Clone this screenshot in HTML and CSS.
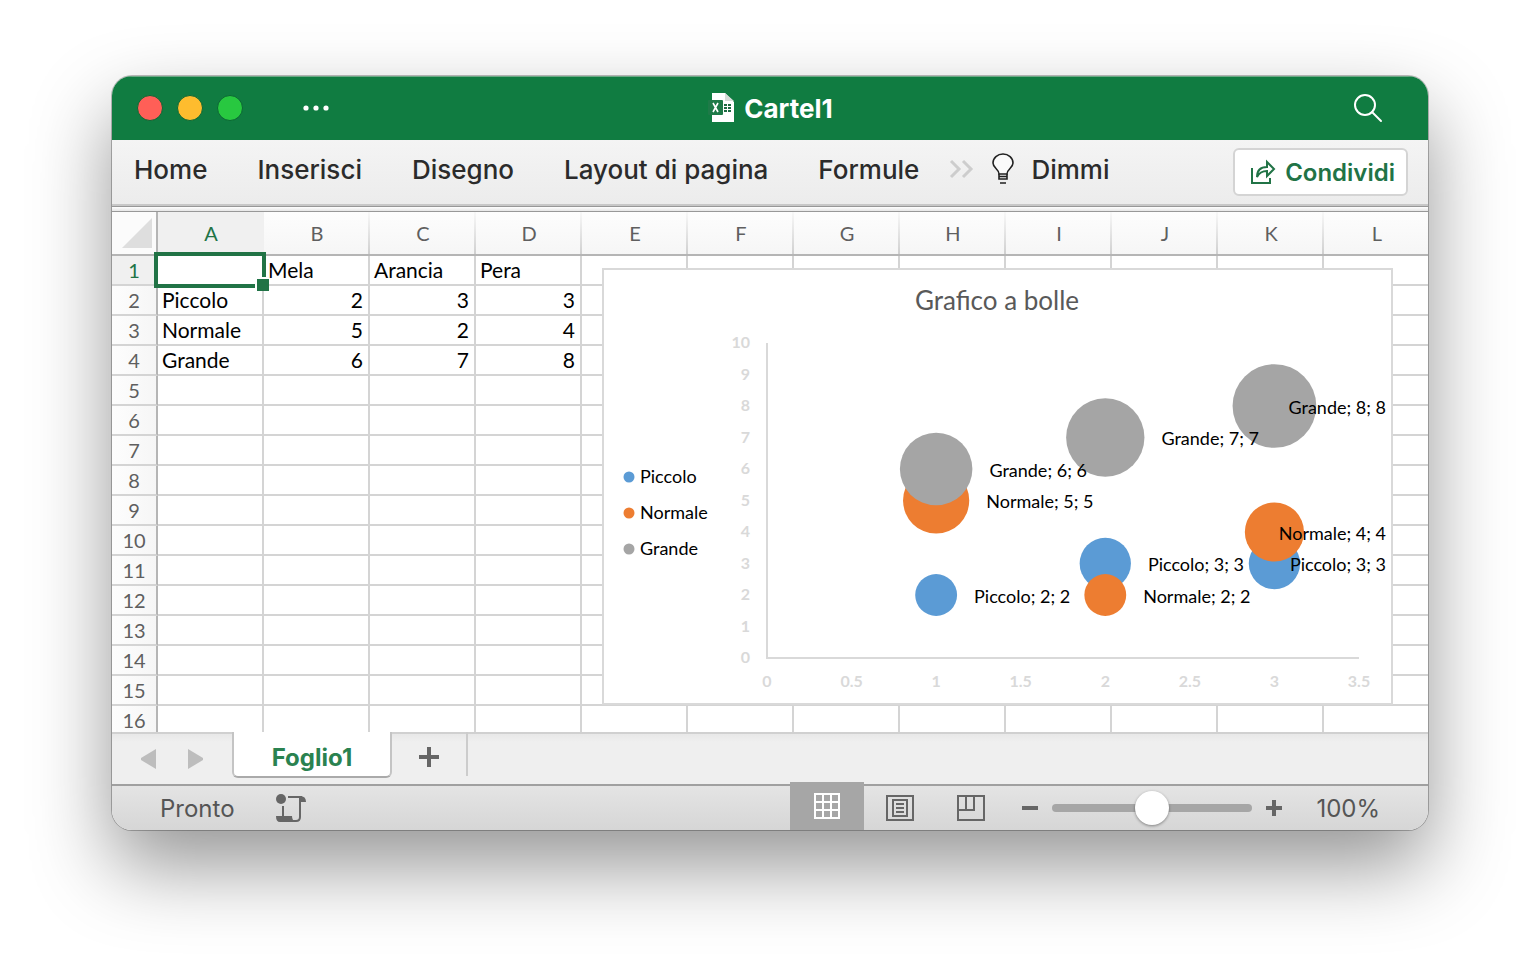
FILE: index.html
```html
<!DOCTYPE html>
<html lang="it">
<head>
    <meta charset="UTF-8">
    <meta name="viewport" content="width=device-width, initial-scale=1.0">
    <title>Cartel1</title>
    <link rel="stylesheet" href="styles.css">
</head>
<body>
    <main class="window">
        <header class="titlebar">
            <div class="titlebar-left">
                <button class="light close" aria-label="Chiudi"></button>
                <button class="light minimize" aria-label="Riduci a icona"></button>
                <button class="light maximize" aria-label="Ingrandisci"></button>
                <button class="icon-button more" aria-label="Altro">
                    <svg width="28" height="8" viewBox="0 0 28 8" fill="#fff">
                        <circle cx="4" cy="4" r="2.6"/><circle cx="14" cy="4" r="2.6"/><circle cx="24" cy="4" r="2.6"/>
                    </svg>
                </button>
            </div>
            <h1>
                <svg width="28" height="32" viewBox="0 0 28 32">
                    <path d="M5 1h13l9 9v20H5z" fill="#fff"/>
                    <path d="M18 1v8h9z" fill="#d5ddd8"/>
                    <g fill="#1d6b42">
                        <path d="M17 12h3v2h-3zM21 12h3v2h-3zM17 15h3v2h-3zM21 15h3v2h-3zM17 18h3v2h-3zM21 18h3v2h-3z"/>
                    </g>
                    <rect x="1" y="8" width="15" height="15" rx="1" fill="#1e7a48"/>
                    <path d="M6 11l5 9M11 11l-5 9" stroke="#fff" stroke-width="1.6"/>
                </svg>
                Cartel1
            </h1>
            <button class="icon-button search" aria-label="Cerca">
                <svg width="30" height="30" viewBox="0 0 30 30" fill="none" stroke="#fff" stroke-width="2">
                    <circle cx="12" cy="12" r="10"/><path d="M19 19l9 9" stroke-linecap="round"/>
                </svg>
            </button>
        </header>

        <nav class="ribbon">
            <button class="tab">Home</button>
            <button class="tab">Inserisci</button>
            <button class="tab">Disegno</button>
            <button class="tab">Layout di pagina</button>
            <button class="tab">Formule</button>
            <div class="ribbon-more">
                <button class="icon-button" aria-label="Altre schede">
                    <svg width="26" height="20" viewBox="0 0 26 20" fill="none" stroke="#cdcdcd" stroke-width="3">
                        <path d="M2 2l8 8-8 8M14 2l8 8-8 8"/>
                    </svg>
                </button>
                <button class="tab tell-me">
                    <svg width="24" height="32" viewBox="0 0 24 32" fill="none" stroke="#222" stroke-width="1.6">
                        <path d="M8 21c0-5-6-6-6-11a10 9 0 0 1 20 0c0 5-6 6-6 11z" fill="#fafafa"/>
                        <path d="M8 21v5h8v-5M8 23.500h8M9 30h6"/>
                    </svg>
                    Dimmi
                </button>
            </div>
            <button class="share">
                <svg width="26" height="26" viewBox="0 0 26 26" fill="none" stroke="#217346" stroke-width="2">
                    <path d="M2 9v15h18v-5"/>
                    <path d="M7 18c0-7 4-10 10-10V3l7 7-7 7v-5c-5 0-8 2-10 6z"/>
                </svg>
                Condividi
            </button>
        </nav>

        <section class="sheet">
            <table>
                <thead><tr id="columns"></tr></thead>
                <tbody id="rows"></tbody>
            </table>
            <figure class="chart">
                <svg id="chart" viewBox="0 0 787 433" role="img" aria-label="Grafico a bolle"></svg>
            </figure>
        </section>

        <div class="sheet-tabs">
            <button class="icon-button arrow" aria-label="Foglio precedente">
                <svg width="16" height="20" viewBox="0 0 16 20" fill="#bdbdbd"><path d="M15 0v20L0 11V9z"/></svg>
            </button>
            <button class="icon-button arrow" aria-label="Foglio successivo">
                <svg width="16" height="20" viewBox="0 0 16 20" fill="#bdbdbd"><path d="M1 0v20l15-9V9z"/></svg>
            </button>
            <button class="sheet-tab">Foglio1</button>
            <button class="icon-button add-sheet" aria-label="Nuovo foglio">
                <svg width="20" height="20" viewBox="0 0 20 20" stroke="#666" stroke-width="4"><path d="M0 10h20M10 0v20"/></svg>
            </button>
        </div>

        <footer class="status">
            <span>Pronto</span>
            <button class="icon-button macro" aria-label="Registra macro">
                <svg width="32" height="30" viewBox="0 0 32 30" fill="none" stroke="#666" stroke-width="2">
                    <circle cx="6" cy="6" r="5" fill="#666" stroke="none"/>
                    <path d="M8 13v11M13 4h14M25 5v19q0 4-4 4h-3"/>
                    <path d="M1 23h16q0 5 4 6H5q-4 0-4-6z" fill="#666" stroke="none"/>
                    <path d="M25 3q6 0 6 6h-6z" fill="#666" stroke="none"/>
                </svg>
            </button>
            <button class="view active" aria-label="Vista normale">
                <svg width="28" height="28" viewBox="0 0 28 28" fill="none" stroke="#fff" stroke-width="2">
                    <path d="M2 2h24v24H2zM10 2v24M18 2v24M2 10h24M2 18h24"/>
                </svg>
            </button>
            <button class="view" aria-label="Layout di pagina">
                <svg width="28" height="26" viewBox="0 0 28 26" fill="none" stroke="#666" stroke-width="2">
                    <path d="M1 1h26v24H1zM7 5h14v16H7zM10 9h8M10 13h8M10 17h8"/>
                </svg>
            </button>
            <button class="view" aria-label="Anteprima interruzioni di pagina">
                <svg width="28" height="26" viewBox="0 0 28 26" fill="none" stroke="#666" stroke-width="2">
                    <path d="M1 1h26v24H1zM1 15h16V1M9 1v14"/>
                </svg>
            </button>
            <div class="zoom">
                <button class="icon-button" aria-label="Riduci">
                    <svg width="16" height="16" viewBox="0 0 16 16" stroke="#666" stroke-width="4"><path d="M0 8h16"/></svg>
                </button>
                <input type="range" min="0" max="200" value="100" aria-label="Zoom">
                <button class="icon-button" aria-label="Aumenta">
                    <svg width="16" height="16" viewBox="0 0 16 16" stroke="#666" stroke-width="4"><path d="M0 8h16M8 0v16"/></svg>
                </button>
            </div>
            <span>100%</span>
        </footer>
    </main>
    <script src="script.js"></script>
</body>
</html>
```
FILE: styles.css
```css
* {
    box-sizing: border-box;
}
body {
    margin: 0;
    padding: 76px 112px 148px;
    height: 100vh;
    display: flex;
    background-color: #fff;
    font-family: Inter, "Liberation Sans", sans-serif;
}
button {
    border: none;
    background: none;
    padding: 0;
    font-family: inherit;
    cursor: pointer;
}
svg {
    display: block;
    flex: none;
}
.window {
    flex: 1;
    min-width: 0;
    display: flex;
    flex-direction: column;
    border-radius: 20px;
    overflow: hidden;
    background-color: #fff;
    box-shadow: 0 0 0 1px rgba(0, 0, 0, 0.25), 0 36px 80px rgba(0, 0, 0, 0.42);
}
.icon-button {
    display: flex;
    align-items: center;
    justify-content: center;
}

/* Barra del titolo */
.titlebar {
    flex: none;
    height: 64px;
    display: grid;
    grid-template-columns: 1fr auto 1fr;
    align-items: center;
    padding: 0 45px 0 25px;
    background-color: #107c41;
    box-shadow: inset 0 1px 0 #6da885;
}
.titlebar-left {
    display: flex;
    align-items: center;
    gap: 14px;
}
.light {
    width: 26px;
    height: 26px;
    border-radius: 50%;
    border: 1px solid #0c6634;
}
.close {
    background-color: #ff5f57;
}
.minimize {
    background-color: #febc2e;
}
.maximize {
    background-color: #28c840;
}
.more {
    margin-left: 45px;
}
.titlebar h1 {
    margin: 0;
    padding-left: 20px;
    display: flex;
    align-items: center;
    gap: 9px;
    color: #fff;
    font-size: 26px;
    font-weight: 700;
}
.search {
    justify-self: end;
}

/* Schede della barra multifunzione */
.ribbon {
    flex: none;
    height: 72px;
    display: flex;
    align-items: flex-start;
    gap: 50px;
    padding: 8px 20px 0 22px;
    background: linear-gradient(#f4f4f4, #ececec 64px, #c8c8c8 64px, #c8c8c8 66px, #989898 66px, #989898 67px, #fff 67px, #e6e6e6 71px, #989898 71px);
}
.tab {
    height: 42px;
    color: #2b2b2b;
    font-size: 26px;
    font-weight: 500;
    white-space: nowrap;
}
.ribbon-more {
    display: flex;
    gap: 16px;
    margin-left: -20px;
}
.tell-me {
    display: flex;
    align-items: center;
    gap: 16px;
}
.share {
    height: 48px;
    margin-left: auto;
    padding: 0 11px 0 15px;
    display: flex;
    align-items: center;
    gap: 9px;
    border: 2px solid #d4d4d4;
    border-radius: 6px;
    background-color: #fff;
    color: #217346;
    font-size: 24px;
    font-weight: 600;
}

/* Foglio */
.sheet {
    flex: 1;
    min-height: 0;
    position: relative;
    overflow: hidden;
    font-family: Lato, "Open Sans", sans-serif;
}
table {
    width: 1318px;
    table-layout: fixed;
    border-collapse: separate;
    border-spacing: 0;
    font-size: 20px;
    line-height: 28px;
}
th,
td {
    width: 106px;
    height: 30px;
    padding: 0 5px 0 4px;
    border-right: 2px solid #d4d4d4;
    border-bottom: 2px solid #d4d4d4;
    text-align: left;
    font-weight: 400;
    color: #000;
}
td {
    font-size: 21px;
}
th {
    text-align: center;
    color: #5f5f5f;
}
thead th {
    height: 44px;
    padding: 0;
    border-right: none;
    border-bottom: 2px solid #b5b5b5;
    background: linear-gradient(#f8f8f8, #d0d0d0) right / 2px 100% no-repeat, linear-gradient(#fdfdfd, #f6f6f6);
}
thead .corner,
tbody th {
    width: 46px;
    padding: 0;
    border-right: 2px solid #b5b5b5;
}
thead .corner {
    background: #fbfbfb;
}
tbody th {
    background: linear-gradient(90deg, #fdfdfd, #f6f6f6);
}
.corner svg {
    margin-left: 10px;
}
thead .current,
tbody .current {
    color: #217346;
    background: #f0f0f0;
}
.number {
    text-align: right;
}
.selected {
    position: relative;
}
.selected::before {
    content: "";
    position: absolute;
    inset: -4px;
    border: 4px solid #217346;
}
.selected::after {
    content: "";
    position: absolute;
    right: -7px;
    bottom: -7px;
    width: 12px;
    height: 12px;
    border: solid #fff;
    border-width: 2px 0 0 2px;
    background-color: #217346;
}

/* Grafico, sopra le celle */
.chart {
    position: absolute;
    left: 490px;
    top: 56px;
    width: 791px;
    margin: 0;
    border: 2px solid #d9d9d9;
    background-color: #fff;
}
.chart-title {
    fill: #595959;
    font-size: 26px;
    text-anchor: middle;
}
.axis {
    stroke: #d9d9d9;
    stroke-width: 2;
}
.tick {
    fill: #d9d9d9;
    font-size: 16px;
    font-weight: 700;
    text-anchor: middle;
}
.tick-y {
    text-anchor: end;
}
.label {
    fill: #000;
    font-size: 18px;
}
.label-end {
    text-anchor: end;
}

/* Schede dei fogli */
.sheet-tabs {
    flex: none;
    height: 52px;
    display: flex;
    align-items: flex-start;
    padding-left: 28px;
    background: linear-gradient(#d0d0d0 2px, #e8e8e8 2px, #efefef 10px);
}
.arrow {
    width: 18px;
    height: 54px;
    margin-right: 28px;
}
.sheet-tab {
    width: 160px;
    height: 46px;
    border: 2px solid #c4c4c4;
    border-top: none;
    border-bottom-color: #aaa;
    border-radius: 0 0 6px 6px;
    background-color: #fff;
    color: #2a8250;
    font-size: 24px;
    font-weight: 700;
    padding-top: 6px;
}
.add-sheet {
    width: 76px;
    height: 44px;
    padding-top: 6px;
    border-right: 2px solid #ccc;
}

/* Barra di stato */
.status {
    flex: none;
    height: 46px;
    display: flex;
    align-items: center;
    padding: 0 48px;
    border-top: 2px solid #a0a0a0;
    background: linear-gradient(#e4e4e4, #d6d6d6);
    color: #555;
    font-size: 24px;
}
.macro {
    margin-left: 40px;
    margin-right: auto;
}
.view {
    width: 71px;
    height: 100%;
    display: flex;
    align-items: center;
    justify-content: center;
}
.view.active {
    width: 74px;
    height: 48px;
    margin-top: -4px;
    background-color: #a6a6a6;
}
.zoom {
    display: flex;
    align-items: center;
    gap: 14px;
    margin: 0 34px 0 16px;
}
.zoom input {
    width: 200px;
    height: 34px;
    margin: 0;
    appearance: none;
    background: none;
}
.zoom input::-webkit-slider-runnable-track {
    height: 8px;
    border-radius: 4px;
    background-color: #a6a6a6;
}
.zoom input::-webkit-slider-thumb {
    appearance: none;
    width: 34px;
    height: 34px;
    margin-top: -13px;
    border-radius: 50%;
    background-color: #fff;
    box-shadow: 0 1px 3px rgba(0, 0, 0, 0.4);
}
```
FILE: script.js
```javascript
const columns = 'ABCDEFGHIJKL'.split('');
const rowCount = 16;
const values = [
    ['', 'Mela', 'Arancia', 'Pera'],
    ['Piccolo', 2, 3, 3],
    ['Normale', 5, 2, 4],
    ['Grande', 6, 7, 8]
];

// Griglia
let head = '<th class="corner"><svg width="30" height="30" viewBox="0 0 30 30"><path d="M30 0v30H0z" fill="#dedede"/></svg></th>';
columns.forEach((name, c) => {
    head += `<th scope="col"${c === 0 ? ' class="current"' : ''}>${name}</th>`;
});
document.getElementById('columns').innerHTML = head;

let body = '';
for (let r = 0; r < rowCount; r++) {
    body += `<tr><th scope="row"${r === 0 ? ' class="current"' : ''}>${r + 1}</th>`;
    columns.forEach((name, c) => {
        const value = values[r] && values[r][c] !== undefined ? values[r][c] : '';
        let cls = typeof value === 'number' ? ' class="number"' : '';
        if (r === 0 && c === 0) cls = ' class="selected"';
        body += `<td${cls}>${value}</td>`;
    });
    body += '</tr>';
}
document.getElementById('rows').innerHTML = body;

// Grafico a bolle
const plot = { left: 163, right: 755, top: 73, bottom: 388 };
const colors = ['#5b9bd5', '#ed7d31', '#a5a5a5'];
const series = values.slice(1);
const px = x => plot.left + x * (plot.right - plot.left) / 3.5;
const py = y => plot.bottom - y * (plot.bottom - plot.top) / 10;

let svg = '<text class="chart-title" x="393" y="40">Grafico a bolle</text>';
svg += `<path class="axis" fill="none" d="M${plot.left} ${plot.top}V${plot.bottom}H${plot.right}"/>`;
for (let y = 0; y <= 10; y++) {
    svg += `<text class="tick tick-y" x="146" y="${py(y) + 5}">${y}</text>`;
}
for (let x = 0; x <= 3.5; x += 0.5) {
    svg += `<text class="tick" x="${px(x)}" y="417">${x}</text>`;
}

let labels = '';
series.forEach(([name, ...points], s) => {
    points.forEach((value, i) => {
        const cx = px(i + 1);
        const cy = py(value);
        const radius = 14.8 * Math.sqrt(value);
        svg += `<circle cx="${cx}" cy="${cy}" r="${radius}" fill="${colors[s]}"/>`;
        // le etichette dell'ultima colonna restano dentro il bordo
        const last = i === points.length - 1;
        labels += `<text class="label${last ? ' label-end' : ''}" x="${last ? 782 : cx + radius + 17}" y="${Math.floor(cy) + 8}">${name}; ${value}; ${value}</text>`;
    });
    const ly = 207 + s * 36;
    svg += `<circle cx="25" cy="${ly}" r="5.5" fill="${colors[s]}"/>`;
    svg += `<text class="label" x="36" y="${ly + 6}">${name}</text>`;
});
document.getElementById('chart').innerHTML = svg + labels;
```
